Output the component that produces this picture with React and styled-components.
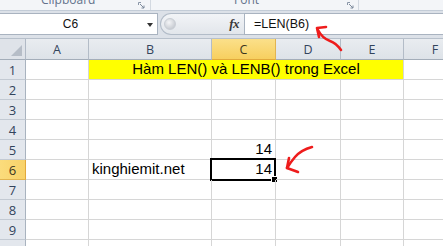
import React from 'react';
import styled, { createGlobalStyle } from 'styled-components';

const GlobalStyle = createGlobalStyle`
  html, body {
    margin: 0;
    padding: 0;
    background: #ffffff;
    overflow: hidden;
  }

  body {
    font-family: "Liberation Sans", Arial, sans-serif;
  }
`;

const COLS = [
  { key: 'A', width: 63 },
  { key: 'B', width: 123 },
  { key: 'C', width: 64 },
  { key: 'D', width: 65 },
  { key: 'E', width: 63 },
  { key: 'F', width: 63 },
];

const ROWS = [1, 2, 3, 4, 5, 6, 7, 8, 9, 10];

const Page = styled.div`
  position: relative;
  width: 443px;
  height: 246px;
  overflow: hidden;
  background: #ffffff;
`;

/* ribbon group labels (only the lower edge is visible) */
const Ribbon = styled.div`
  display: flex;
  height: 10px;
  overflow: hidden;
  background: #f3f5f8;
  border-bottom: 1px solid #c3ccd7;
`;

const RibbonGroup = styled.div`
  display: flex;
  align-items: flex-start;
  width: ${(p) => p.width}px;
  flex: ${(p) => (p.width ? 'none' : '1')};
  padding-left: ${(p) => p.labelAt || 0}px;
  box-sizing: border-box;
  border-right: ${(p) => (p.width ? '1px solid #d3d9e1' : 'none')};
`;

const GroupLabel = styled.span`
  flex: 1;
  margin-top: -6px;
  font-family: "Open Sans", "Liberation Sans", sans-serif;
  font-size: 12px;
  line-height: 12px;
  color: #62718a;
`;

const Launcher = styled.svg`
  margin: 2px ${(p) => p.gap}px 0 0;
  flex: none;
`;

const FormulaBar = styled.div`
  display: flex;
  align-items: stretch;
  height: 22px;
  padding: 2px 0 3px;
  background: #dce1e8;
`;

const NameBox = styled.div`
  display: flex;
  align-items: center;
  width: 158px;
  box-sizing: border-box;
  background: #ffffff;
  border: 1px solid #a9b3c0;
  border-left: none;
`;

const NameText = styled.span`
  flex: 1;
  text-align: center;
  font-size: 12px;
  color: #111111;
`;

const DropArrow = styled.span`
  width: 0;
  height: 0;
  margin: 2px 4px 0 6px;
  border-left: 3.5px solid transparent;
  border-right: 3.5px solid transparent;
  border-top: 4px solid #333333;
`;

const FxPanel = styled.div`
  display: flex;
  align-items: center;
  justify-content: space-between;
  width: 84px;
  margin-left: 2px;
  padding: 0 5px 0 3px;
  box-sizing: border-box;
  background: linear-gradient(#f2f4f7, #e2e6eb);
  border: 1px solid #b2bcc8;
  border-right: none;
  border-radius: 11px 0 0 11px;
`;

const Grip = styled.span`
  width: 10px;
  height: 10px;
  border-radius: 50%;
  background: radial-gradient(circle at 40% 35%, #f4f5f7, #b9bec6);
  border: 1px solid #c9ced5;
`;

const FxLabel = styled.span`
  font-family: "Liberation Serif", "Times New Roman", serif;
  font-style: italic;
  font-weight: bold;
  font-size: 13px;
  color: #3a3a3a;
  letter-spacing: -0.5px;
`;

const FormulaInput = styled.div`
  flex: 1;
  display: flex;
  align-items: center;
  padding-left: 9px;
  background: #ffffff;
  border: 1px solid #a9b3c0;
  border-right: none;
  font-size: 12.5px;
  color: #111111;
`;

const Sheet = styled.div`
  display: grid;
  grid-template-columns: 26px ${COLS.map((c) => `${c.width}px`).join(' ')};
  grid-template-rows: 21px;
  grid-auto-rows: 20px;
  border-top: 1px solid #b7c0cb;
`;

const Corner = styled.div`
  display: flex;
  align-items: flex-end;
  justify-content: flex-end;
  padding: 0 3px 3px 0;
  background: #dfe3e9;
  border-right: 1px solid #b0b9c5;
  border-bottom: 1px solid #a3adb9;
`;

const ColHeader = styled.div`
  display: flex;
  align-items: center;
  justify-content: center;
  font-family: "Open Sans", "Liberation Sans", sans-serif;
  font-size: 12.5px;
  color: ${(p) => (p.active ? '#3b3520' : '#33445c')};
  background: ${(p) => (p.active
    ? 'linear-gradient(#fbe08a, #f7cf5f)'
    : 'linear-gradient(#e9ecf0, #dde2e8)')};
  border-right: 1px solid ${(p) => (p.active ? '#e2b450' : '#b3bcc7')};
  border-bottom: 1px solid ${(p) => (p.active ? '#e2a93c' : '#a3adb9')};
`;

const RowHeader = styled.div`
  display: flex;
  align-items: center;
  justify-content: center;
  font-family: "Open Sans", "Liberation Sans", sans-serif;
  font-size: 13px;
  color: ${(p) => (p.active ? '#3b3520' : '#33445c')};
  background: ${(p) => (p.active ? 'linear-gradient(90deg, #fbdc7c, #f8d269)' : '#e3e7ed')};
  border-right: 1px solid ${(p) => (p.active ? '#e2a93c' : '#a9b3bf')};
  border-bottom: 1px solid ${(p) => (p.active ? '#e2b450' : '#c3cad3')};
`;

const Cell = styled.div`
  position: relative;
  display: flex;
  align-items: flex-end;
  justify-content: ${(p) => ({ left: 'flex-start', right: 'flex-end', center: 'center' }[p.align || 'left'])};
  grid-column: ${(p) => p.span || 'auto'};
  padding: 0 3px 1px;
  font-size: 15px;
  line-height: 18px;
  color: #000000;
  white-space: nowrap;
  background: ${(p) => p.fill || 'transparent'};
  border-right: 1px solid #d6d6d6;
  border-bottom: 1px solid #d6d6d6;
`;

const Selection = styled.div`
  position: absolute;
  left: -2px;
  top: -2px;
  right: -1px;
  bottom: -2px;
  border: 2px solid #000000;
  pointer-events: none;
`;

const FillHandle = styled.span`
  position: absolute;
  right: -4px;
  bottom: -4px;
  width: 5px;
  height: 5px;
  background: #000000;
  border: 1px solid #ffffff;
`;

const Annotations = styled.svg`
  position: absolute;
  left: 0;
  top: 0;
  pointer-events: none;
`;

const LauncherIcon = ({ gap }) => (
  <Launcher gap={gap} width="8" height="8" viewBox="0 0 8 8">
    <path d="M0.5 0.5 H3 M0.5 0.5 V3" stroke="#8a96a8" fill="none" />
    <path d="M2 2 L6 6 M3.5 6 H6 V3.5" stroke="#7d8a9c" fill="none" />
  </Launcher>
);

const CornerTriangle = () => (
  <svg width="11" height="11" viewBox="0 0 11 11">
    <path d="M11 0 V11 H0 Z" fill="#b6bdc7" />
  </svg>
);

const cellContent = (row, col) => {
  if (row === 5 && col === 'C') return { text: '14', align: 'right' };
  if (row === 6 && col === 'C') return { text: '14', align: 'right', selected: true };
  if (row === 6 && col === 'B') return { text: 'kinghiemit.net' };
  return null;
};

const SheetRow = ({ row }) => {
  if (row === 1) {
    return (
      <>
        <RowHeader>{row}</RowHeader>
        <Cell />
        <Cell span="span 4" fill="#ffff00" align="center">Hàm LEN() và LENB() trong Excel</Cell>
        <Cell />
      </>
    );
  }

  return (
    <>
      <RowHeader active={row === 6}>{row}</RowHeader>
      {COLS.map((c) => {
        const content = cellContent(row, c.key);
        return (
          <Cell key={c.key} align={content ? content.align : 'left'}>
            {content && content.text}
            {content && content.selected && (
              <Selection>
                <FillHandle />
              </Selection>
            )}
          </Cell>
        );
      })}
    </>
  );
};

const App = () => (
  <Page>
    <GlobalStyle />
    <Ribbon>
      <RibbonGroup width={151} labelAt={41}>
        <GroupLabel>Clipboard</GroupLabel>
        <LauncherIcon gap={4} />
      </RibbonGroup>
      <RibbonGroup width={208} labelAt={83}>
        <GroupLabel>Font</GroupLabel>
        <LauncherIcon gap={3} />
      </RibbonGroup>
      <RibbonGroup />
    </Ribbon>

    <FormulaBar>
      <NameBox>
        <NameText>C6</NameText>
        <DropArrow />
      </NameBox>
      <FxPanel>
        <Grip />
        <FxLabel>fx</FxLabel>
      </FxPanel>
      <FormulaInput>=LEN(B6)</FormulaInput>
    </FormulaBar>

    <Sheet>
      <Corner>
        <CornerTriangle />
      </Corner>
      {COLS.map((c) => (
        <ColHeader key={c.key} active={c.key === 'C'}>{c.key}</ColHeader>
      ))}
      {ROWS.map((r) => (
        <SheetRow key={r} row={r} />
      ))}
    </Sheet>

    {/* red hand-drawn arrows */}
    <Annotations width="443" height="246" viewBox="0 0 443 246">
      <g stroke="#ee1c1c" strokeWidth="2.6" fill="none" strokeLinecap="round" strokeLinejoin="round">
        <path d="M341 50 Q336 43 330 41 Q322 38 318 30" />
        <path d="M317 28 L319 37 M317 28 L326 27" />
        <path d="M312 147 Q301 150 295 157 Q290 163 287 168" />
        <path d="M287 168 L289 158 M287 168 L298 172" />
      </g>
    </Annotations>
  </Page>
);

export default App;
